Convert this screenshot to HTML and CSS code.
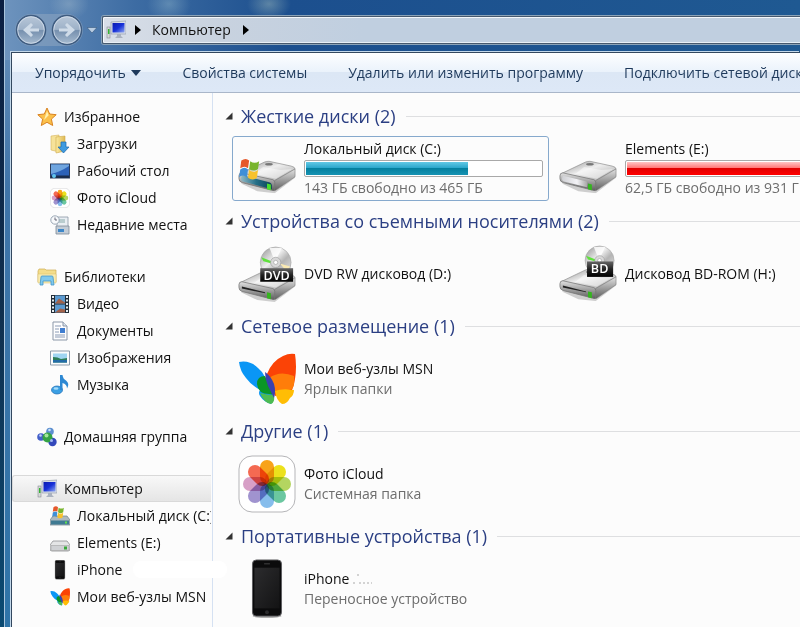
FILE: index.html
```html
<!doctype html>
<html lang="ru">
  <head>
    <meta charset="utf-8">
    <meta name="viewport" content="width=device-width, initial-scale=1">
    <title>Компьютер</title>
    <link rel="stylesheet" href="styles.css">
  </head>
  <body>
    <!-- shared shapes -->
    <svg class="defs" aria-hidden="true">
      <defs>
        <linearGradient id="g-top" x1="0" y1="0" x2="1" y2="1"><stop offset="0" stop-color="#8a8a8a"/><stop offset=".45" stop-color="#eee"/><stop offset="1" stop-color="#a5a5a5"/></linearGradient>
        <linearGradient id="g-side" x1="0" y1="0" x2="0" y2="1"><stop offset="0" stop-color="#e2e2e2"/><stop offset="1" stop-color="#5e5e5e"/></linearGradient>
        <linearGradient id="g-front" x1="0" y1="0" x2="1" y2="0"><stop offset="0" stop-color="#cfd0d4"/><stop offset=".6" stop-color="#f3f3f6"/><stop offset="1" stop-color="#a9a9a9"/></linearGradient>
        <linearGradient id="g-teal" x1="0" y1="0" x2="1" y2="0"><stop offset="0" stop-color="#8fb9c6"/><stop offset=".5" stop-color="#256f87"/><stop offset="1" stop-color="#0a4356"/></linearGradient>
        <linearGradient id="g-disc" x1="0" y1="0" x2="1" y2="1"><stop offset="0" stop-color="#8c8c8c"/><stop offset=".4" stop-color="#eee"/><stop offset=".6" stop-color="#b4b4b4"/><stop offset="1" stop-color="#ececec"/></linearGradient>
        <linearGradient id="g-tag" x1="0" y1="0" x2="0" y2="1"><stop offset="0" stop-color="#666"/><stop offset=".5" stop-color="#222"/><stop offset="1" stop-color="#000"/></linearGradient>
        <linearGradient id="g-screen" x1="0" y1="0" x2="1" y2="1"><stop offset="0" stop-color="#0a1bb0"/><stop offset=".5" stop-color="#1730d8"/><stop offset="1" stop-color="#8fa8f0"/></linearGradient>
        <linearGradient id="g-phone" x1="0" y1="0" x2="1" y2="1"><stop offset="0" stop-color="#2c2c2e"/><stop offset="1" stop-color="#131314"/></linearGradient>
        <linearGradient id="g-fold" x1="0" y1="0" x2="1" y2="0"><stop offset="0" stop-color="#fbeaa0"/><stop offset="1" stop-color="#dfb954"/></linearGradient>
        <linearGradient id="g-nav" x1="0" y1="0" x2="0" y2="1"><stop offset="0" stop-color="#b9c8d9"/><stop offset=".48" stop-color="#9db1c8"/><stop offset=".52" stop-color="#7690af"/><stop offset="1" stop-color="#a9bdd1"/></linearGradient>

        <symbol id="flag" viewBox="0 0 20 20">
          <path d="M3 2q4-3 7 0l-1 7q-3-3-7 0z" fill="#e5582b"/>
          <path d="M11 2.500q4 3 8 0l-1 7q-4 3-8 0z" fill="#79b52e"/>
          <path d="M2 10q4-3 7 0l-1 7q-4-3-7 0z" fill="#3f8fd8"/>
          <path d="M10 10.500q4 3 8 0l-1 7q-4 3-8 0z" fill="#f8c22c"/>
        </symbol>
        <symbol id="drive" viewBox="0 0 60 34">
          <path d="M3 24 20 32 38 34 59 18v-4z" fill="#000" opacity=".18"/>
          <path d="M2 14 27 2q2-1 5-1l23 5q4 1 4 3L38 21z" fill="url(#g-top)" stroke="#8d8d8d" stroke-width=".7"/>
          <path d="M38 21 59 9v8L39 31q-2 1-3 0z" fill="url(#g-side)" stroke="#7b7b7b" stroke-width=".6"/>
          <path d="M4 13 36 20q2 1 2 3v7q-1 2-3 1L4 23q-3-1-3-4v-3q0-3 3-3z" fill="url(#g-side)" stroke="#777" stroke-width=".8"/>
          <path d="M26 7 44 10 56 9 39 19 17 14z" fill="#fff" opacity=".45"/>
          <ellipse cx="32" cy="4" rx="4" ry="1.300" fill="#777"/>
        </symbol>
        <symbol id="monitor" viewBox="0 0 20 20">
          <rect x="1" y="7" width="3" height="11" fill="#d6dad6" stroke="#778" stroke-width=".5"/>
          <path d="M2 9h1.500v5H2z" fill="#32b432"/>
          <path d="M5 2 20 1v13L5 14z" fill="#d9dee8" stroke="#8a93a5" stroke-width=".6"/>
          <path d="M6.500 3h12v9.500h-12z" fill="url(#g-screen)"/>
          <path d="M11 14h4v2l2 2H9l2-2z" fill="#aab2bf"/>
        </symbol>
        <symbol id="petals" viewBox="0 0 58 58">
          <rect x="1" y="1" width="56" height="56" rx="13" fill="#fff" stroke="#b5b5b8"/>
          <g class="petals">
            <rect x="22" y="5" width="14" height="24" rx="7" fill="#f8a31b"/>
            <rect x="22" y="5" width="14" height="24" rx="7" fill="#ece11c" transform="rotate(45 29 29)"/>
            <rect x="22" y="5" width="14" height="24" rx="7" fill="#b4d560" transform="rotate(90 29 29)"/>
            <rect x="22" y="5" width="14" height="24" rx="7" fill="#6bc7a0" transform="rotate(135 29 29)"/>
            <rect x="22" y="5" width="14" height="24" rx="7" fill="#86bdec" transform="rotate(180 29 29)"/>
            <rect x="22" y="5" width="14" height="24" rx="7" fill="#a093cf" transform="rotate(225 29 29)"/>
            <rect x="22" y="5" width="14" height="24" rx="7" fill="#d79fc6" transform="rotate(270 29 29)"/>
            <rect x="22" y="5" width="14" height="24" rx="7" fill="#f46a52" transform="rotate(315 29 29)"/>
          </g>
        </symbol>
        <symbol id="butterfly" viewBox="0 0 58 54">
          <path d="M1 10Q12 8 20 16 25 20 27 25L34 42Q36 50 33 52 26 50 22 44 20 41 22 38 13 33 8 26 2 19 1 10z" fill="#0a96f5"/>
          <path d="M19 32Q19 24 27 24L36 43 31 42Q20 42 19 32z" fill="#0a9626"/>
          <path d="M22 41Q29 43 36 43 37 51 33 52 26 51 22 41z" fill="#4dbb52"/>
          <path d="M29 22Q34 9 45 4 51 1 57 2 59 15 57 27 56 34 54 38L37 44z" fill="#fb4306"/>
          <path d="M31 26Q42 18 56 24 57 33 54 37L37 40z" fill="#ff7d0a"/>
          <path d="M37 39Q44 36 56 38 56 43 52 46 49 52 44 52 38 48 37 39z" fill="#ffbd05"/>
          <path d="M27 20Q33 24 36 32 38 39 36 46 33 40 30 34 27 27 27 20z" fill="#3a40b0"/>
        </symbol>
        <symbol id="phone" viewBox="0 0 32 62">
          <ellipse cx="16" cy="59" rx="15" ry="2" fill="#000" opacity=".3"/>
          <rect x="1" y="1" width="30" height="58" rx="4" fill="#0b0b0c" stroke="#5d5d60"/>
          <rect x="3" y="9" width="26" height="42" fill="url(#g-phone)"/>
          <path d="M13 5h6" stroke="#444"/>
          <circle cx="16" cy="55" r="2" fill="#2a2a2c"/>
        </symbol>
        <symbol id="disc" viewBox="0 0 32 32">
          <circle cx="16" cy="16" r="15" fill="url(#g-disc)" stroke="#a5a5a5" stroke-width=".6"/>
          <path d="M2 11 12 15 12 17 4 15z" fill="#5fe03c"/>
          <path d="M20 17 30 20 27 25z" fill="#f9e9b2"/>
          <path d="M10 2 22 2 17 12h-3z" fill="#fff" opacity=".8"/>
          <circle cx="16" cy="16" r="5" fill="#d8d8d8" stroke="#999" stroke-width=".6"/>
          <circle cx="16" cy="16" r="2" fill="#fff" stroke="#999" stroke-width=".6"/>
        </symbol>
      </defs>
    </svg>

    <div class="window">
      <header class="titlebar">
        <div class="history">
          <button class="round" aria-label="Назад"><svg viewBox="0 0 32 32"><circle cx="16" cy="16" r="14.500" fill="url(#g-nav)" stroke="#3f5c80" stroke-width="1.500"/><circle cx="16" cy="16" r="13.300" fill="none" stroke="#d5e0ec" stroke-width=".8"/><path d="M8 16l8-7 2 2-3 3.500h9v3h-9l3 3.500-2 2z" fill="#cfdbe8"/></svg></button>
          <button class="round" aria-label="Вперед"><svg viewBox="0 0 32 32"><circle cx="16" cy="16" r="14.500" fill="url(#g-nav)" stroke="#3f5c80" stroke-width="1.500"/><circle cx="16" cy="16" r="13.300" fill="none" stroke="#d5e0ec" stroke-width=".8"/><path d="M24 16l-8-7-2 2 3 3.500H8v3h9L14 21l2 2z" fill="#cfdbe8"/></svg></button>
        </div>
        <button class="recent" aria-label="Последние страницы"><svg viewBox="0 0 10 6"><path d="M0 .5h10L5 6z" fill="#b9cde2" stroke="#35577e" stroke-width=".6"/></svg></button>
        <nav class="address" aria-label="Адрес">
          <svg class="ico"><use href="#monitor"/></svg>
          <svg class="arrow" viewBox="0 0 6 10"><path d="M0 0l6 5-6 5z"/></svg>
          <button class="crumb">Компьютер</button>
          <svg class="arrow" viewBox="0 0 6 10"><path d="M0 0l6 5-6 5z"/></svg>
        </nav>
      </header>

      <div class="client">
        <div class="toolbar">
          <button>Упорядочить <svg class="caret" viewBox="0 0 10 6"><path d="M0 0h10L5 6z"/></svg></button>
          <button>Свойства системы</button>
          <button>Удалить или изменить программу</button>
          <button>Подключить сетевой диск</button>
        </div>

        <div class="panes">
          <nav class="tree">
            <ul>
              <li><a href="#"><svg class="ico" viewBox="0 0 20 20"><path d="M10 1l2.700 6 6.500.7-4.800 4.400 1.300 6.400L10 15.300l-5.700 3.200 1.300-6.400L.8 7.700 7.300 7z" fill="#fbc04a" stroke="#d98322"/><path d="M10 4l1.700 4.300L7 13z" fill="#fff0b0"/></svg>Избранное</a></li>
              <li class="sub"><a href="#"><svg class="ico" viewBox="0 0 20 20"><path d="M1 2l8-1v17l-8-2z" fill="#f6e299" stroke="#d5b25a" stroke-width=".6"/><path d="M6 3l9-1v15l-9 2z" fill="url(#g-fold)" stroke="#cfa94c" stroke-width=".6"/><path d="M11 8h5v5h3l-5.500 6L8 13h3z" fill="#3f9be0" stroke="#1b67ac" stroke-width=".7"/></svg>Загрузки</a></li>
              <li class="sub"><a href="#"><svg class="ico" viewBox="0 0 20 20"><rect x=".5" y="3" width="19" height="14" fill="#2d62b8" stroke="#2b3b58"/><path d="M1 13Q10 11 19 5V3.500H1z" fill="#6fa5df"/><path d="M1 14.500h18V17H1z" fill="#1b2d4c"/><circle cx="4" cy="15" r="2" fill="#62c4ee"/></svg>Рабочий стол</a></li>
              <li class="sub"><a href="#"><svg class="ico"><use href="#petals"/></svg>Фото iCloud</a></li>
              <li class="sub"><a href="#"><svg class="ico" viewBox="0 0 20 20"><path d="M7 2h11v11H7z" fill="#e9eef3" stroke="#8b97a5" stroke-width=".8"/><path d="M6 11h13v8H6z" fill="#c3ccd6" stroke="#7e8a98" stroke-width=".8"/><path d="M9 5h6M9 7h6" stroke="#8aa"/><path d="M8 14h6v3H8z" fill="#3d87c9"/><circle cx="5" cy="5" r="4.200" fill="#f7f9fb" stroke="#9aa7b5"/><path d="M5 2.500V5h2" fill="none" stroke="#667"/></svg>Недавние места</a></li>
            </ul>
            <ul>
              <li><a href="#"><svg class="ico" viewBox="0 0 20 20"><path d="M1 4l1-2h6l1 1h10v12H1z" fill="#f3dd8b" stroke="#cfae55" stroke-width=".7"/><path d="M1 7h18v9H1z" fill="#f9ebb0" stroke="#d9bd68" stroke-width=".5"/><path d="M3 18l1-8q0-1 1-1h10q1 0 1 1l1 8h-3v-4H6v4z" fill="#7fc9ee" stroke="#4195c8" stroke-width=".8"/></svg>Библиотеки</a></li>
              <li class="sub"><a href="#"><svg class="ico" viewBox="0 0 20 20"><path d="M1 1h18v18H1z" fill="#222c36"/><path d="M5 1.500h10v8H5zM5 10.500h10v8H5z" fill="#5b9ad0"/><path d="M5 9.500l4-5 6 4v1zM5 18.500l5-4 5 1v3z" fill="#a2624a"/><path d="M3 2v17M17 2v17" stroke="#e6edf2" stroke-width="2" stroke-dasharray="2 1.500"/></svg>Видео</a></li>
              <li class="sub"><a href="#"><svg class="ico" viewBox="0 0 20 20"><path d="M3 1h10l4 4v14H3z" fill="#fdfdfe" stroke="#8b97a8"/><path d="M13 1v4h4" fill="#dde5ee" stroke="#8b97a8"/><path d="M5 5h6M5 8h4M5 11h4M5 14h10M5 16h10" stroke="#8b9bb5"/><path d="M10 7h5v5h-5z" fill="#3f7dd0"/></svg>Документы</a></li>
              <li class="sub"><a href="#"><svg class="ico" viewBox="0 0 20 20"><path d="M.5 3h19v14H.5z" fill="#fafbfc" stroke="#8e9cab"/><path d="M3 5.500h14v9H3z" fill="#9fd5f2"/><path d="M3 9q5 0 8 2l6-1v4.500H3z" fill="#2c7d58"/><path d="M3 12h14v2.500H3z" fill="#226ba8"/></svg>Изображения</a></li>
              <li class="sub"><a href="#"><svg class="ico" viewBox="0 0 20 20"><ellipse cx="7" cy="15" rx="5.500" ry="4" fill="#3b9fe3" stroke="#1d6cb5" stroke-width=".7"/><path d="M10 0h2.500Q13 4 16 5.500q4 3 1 8Q17 9 12.500 8v7H10z" fill="#2d88d3"/><ellipse cx="6" cy="13.500" rx="2.500" ry="1.200" fill="#a6dcfa"/></svg>Музыка</a></li>
            </ul>
            <ul>
              <li><a href="#"><svg class="ico" viewBox="0 0 20 20"><circle cx="13" cy="4.500" r="3.800" fill="#5d8fd0"/><circle cx="4" cy="10" r="3.800" fill="#4560c9"/><circle cx="15.500" cy="15" r="4.200" fill="#3348bb"/><circle cx="10.500" cy="10.500" r="5" fill="#35a345"/><circle cx="9.500" cy="8.500" r="2" fill="#a4e69a"/><circle cx="3.500" cy="8.500" r="1.300" fill="#bcd0fb"/><circle cx="14.500" cy="13.500" r="1.500" fill="#a2b6f6"/><circle cx="12.500" cy="3" r="1.300" fill="#c7e0f5"/></svg>Домашняя группа</a></li>
            </ul>
            <ul>
              <li class="selected"><a href="#" aria-current="page"><svg class="ico"><use href="#monitor"/></svg>Компьютер</a></li>
              <li class="sub"><a href="#"><svg class="ico" viewBox="0 0 20 20"><path d="M3 10h14l3 4v5H0v-5z" fill="#aeb9bf" stroke="#6f7f88" stroke-width=".7"/><path d="M1 14.500h18v4H1z" fill="#3f7a92"/><path d="M15 15.500h2v2h-2z" fill="#5fe24c"/><use href="#flag" x="1" y="0" width="14" height="13"/></svg>Локальный диск (C:)</a></li>
              <li class="sub"><a href="#"><svg class="ico" viewBox="0 0 20 20"><path d="M3 8h14l3 4v4q0 2-2 2H2q-2 0-2-2v-4z" fill="#e4e5e6" stroke="#8d8f92" stroke-width=".8"/><path d="M1 12.500h18v4q0 1-1 1H2q-1 0-1-1z" fill="#cfd1d4" stroke="#999" stroke-width=".5"/><path d="M14 13.500h3v3h-3z" fill="#39a83a"/></svg>Elements (E:)</a></li>
              <li class="sub blotted"><a href="#"><svg class="ico"><use href="#phone"/></svg>iPhone</a></li>
              <li class="sub"><a href="#"><svg class="ico"><use href="#butterfly"/></svg>Мои веб-узлы MSN</a></li>
            </ul>
          </nav>

          <main class="content">
            <details open>
              <summary><svg class="twist" viewBox="0 0 8 8"><path d="M7.500.5v7h-7z"/></svg><h2>Жесткие диски (2)</h2></summary>
              <div class="tiles">
                <a class="tile focused" href="#">
                  <svg class="big" viewBox="0 0 60 60"><use href="#drive" x="0" y="21" width="60" height="34"/><path d="M4 36l29 8q2 1 2 3v4L5 43q-2-1-2-3z" fill="url(#g-teal)"/><path d="M30 45l4 1v6l-4-1z" fill="#4be02c"/><use href="#flag" x="0" y="19" width="23" height="23"/></svg>
                  <span class="info">
                    <span class="name">Локальный диск (C:)</span>
                    <span class="bar"><span class="used" style="width: 69%"></span></span>
                    <span class="note">143 ГБ свободно из 465 ГБ</span>
                  </span>
                </a>
                <a class="tile" href="#">
                  <svg class="big" viewBox="0 0 60 60"><use href="#drive" x="0" y="21" width="60" height="34"/><path d="M4 37l25 6v6L5 43q-2-1-2-3z" fill="url(#g-front)"/><path d="M30 45l4 1v6l-4-1z" fill="#35b51f"/></svg>
                  <span class="info">
                    <span class="name">Elements (E:)</span>
                    <span class="bar full"><span class="used" style="width: 93%"></span></span>
                    <span class="note">62,5 ГБ свободно из 931 ГБ</span>
                  </span>
                </a>
              </div>
            </details>

            <details open>
              <summary><svg class="twist" viewBox="0 0 8 8"><path d="M7.500.5v7h-7z"/></svg><h2>Устройства со съемными носителями (2)</h2></summary>
              <div class="tiles">
                <a class="tile" href="#">
                  <svg class="big" viewBox="0 0 60 60"><use href="#drive" x="0" y="25" width="60" height="34"/><path d="M4 43l24 6v1L4 45z" fill="#222"/><path d="M30 49l4 1v6l-4-1z" fill="#35b51f"/><use href="#disc" x="22" y="1" width="34" height="34"/><rect x="23" y="24" width="34" height="14" fill="url(#g-tag)"/><text class="tag" x="40" y="36">DVD</text></svg>
                  <span class="info"><span class="name">DVD RW дисковод (D:)</span></span>
                </a>
                <a class="tile" href="#">
                  <svg class="big" viewBox="0 0 60 60"><use href="#drive" x="0" y="24" width="60" height="34"/><path d="M4 42l24 6v1L4 44z" fill="#222"/><path d="M30 48l4 1v6l-4-1z" fill="#35b51f"/><use href="#disc" x="26" y="0" width="32" height="32"/><rect x="29" y="17" width="27" height="16" fill="url(#g-tag)"/><text class="tag" x="42" y="29">BD</text></svg>
                  <span class="info"><span class="name">Дисковод BD-ROM (H:)</span></span>
                </a>
              </div>
            </details>

            <details open>
              <summary><svg class="twist" viewBox="0 0 8 8"><path d="M7.500.5v7h-7z"/></svg><h2>Сетевое размещение (1)</h2></summary>
              <div class="tiles">
                <a class="tile" href="#">
                  <svg class="big"><use href="#butterfly"/></svg>
                  <span class="info">
                    <span class="name">Мои веб-узлы MSN</span>
                    <span class="note">Ярлык папки</span>
                  </span>
                </a>
              </div>
            </details>

            <details open>
              <summary><svg class="twist" viewBox="0 0 8 8"><path d="M7.500.5v7h-7z"/></svg><h2>Другие (1)</h2></summary>
              <div class="tiles">
                <a class="tile" href="#">
                  <svg class="big"><use href="#petals"/></svg>
                  <span class="info">
                    <span class="name">Фото iCloud</span>
                    <span class="note">Системная папка</span>
                  </span>
                </a>
              </div>
            </details>

            <details open>
              <summary><svg class="twist" viewBox="0 0 8 8"><path d="M7.500.5v7h-7z"/></svg><h2>Портативные устройства (1)</h2></summary>
              <div class="tiles">
                <a class="tile" href="#">
                  <svg class="big"><use href="#phone"/></svg>
                  <span class="info">
                    <span class="name">iPhone <svg class="specks" viewBox="0 0 20 10"><path d="M0 9h2M4 1h2M6 9h2M10 9h2M14 9h2M18 9h1" stroke="#aaa"/></svg></span>
                    <span class="note">Переносное устройство</span>
                  </span>
                </a>
              </div>
            </details>
          </main>
        </div>
      </div>
    </div>
  </body>
</html>
```
FILE: styles.css
```css
* { box-sizing: border-box; }
html { height: 100%; }
body { margin: 0; min-height: 100%; display: flex; overflow: hidden; background: linear-gradient(#0b1f42, #10304f 50%, #0b4a72); font: 14px/20px "Open Sans", "Noto Sans", sans-serif; color: #111; }
button { border: 0; padding: 0; margin: 0; background: none; font: inherit; color: inherit; white-space: nowrap; }
a { color: inherit; text-decoration: none; }
ul { list-style: none; margin: 0; padding: 0; }
.defs { position: absolute; width: 0; height: 0; }
.ico { width: 20px; height: 20px; flex: none; }

/* glass frame */
.window { flex: 1; min-width: 0; margin-left: 4px; padding-left: 6px; display: flex; flex-direction: column; border-left: 1px solid #a9c4dc; background: radial-gradient(ellipse 20px 16px at 64px 4px, #a9bfce66, transparent), radial-gradient(ellipse 22px 18px at 164px 4px, #9cc0d066, transparent), radial-gradient(ellipse 22px 16px at 264px 4px, #b7cfc466, transparent), linear-gradient(90deg, #6d93bd, #3d6ca3 130px, #1c4f8e 280px, #1f5992) 0 0 / 100% 60px no-repeat, linear-gradient(#6d93bd, #3f74a8 30%, #2f74a8); }
.titlebar { display: flex; align-items: center; height: 52px; padding: 8px 0 0 4px; }
.history { display: flex; gap: 4px; border-radius: 17px; background: #8ba3bf99; }
.round { width: 32px; height: 32px; }
.round svg { display: block; }
.recent { width: 10px; margin: 0 5px 0 4px; }
.recent svg { display: block; }
.address { flex: 1; display: flex; align-items: center; height: 28px; padding-left: 3px; border: 1px solid #47596e; border-right: 0; border-radius: 2px 0 0 2px; background: linear-gradient(90deg, #d9dfe8, #c8d2df 120px, #c0cfe0 260px); box-shadow: inset 1px 1px #f3f7fb, inset 0 -1px #e8eff6, 0 0 0 1px #8ba3b8; }
.arrow { width: 6px; height: 10px; margin: 0 11px 0 9px; }
.crumb + .arrow { margin-left: 12px; }

.client { flex: 1; display: flex; flex-direction: column; border-left: 1px solid #33485f; border-top: 1px solid #33485f; background: #fcfcfc; box-shadow: -1px -1px #c3d8ea; }
.toolbar { display: flex; align-items: center; gap: 41px; height: 40px; padding-left: 23px; overflow: hidden; border-bottom: 1px solid #a9b6c9; background: linear-gradient(#fdfeff, #eaf2fb 49%, #dce7f5 50%, #dde8f7); color: #1e395b; }
.caret { width: 10px; height: 6px; margin-left: 2px; vertical-align: 2px; fill: #1e395b; }
.panes { flex: 1; display: flex; }

/* navigation tree */
.tree { width: 201px; flex: none; padding: 10px 0; border-right: 1px solid #d5e1f2; }
.tree ul + ul { margin-top: 25px; }
.tree a { display: flex; align-items: center; gap: 7px; height: 27px; padding-left: 25px; margin-right: 1px; overflow: hidden; white-space: nowrap; }
.tree .sub a { padding-left: 38px; }
.tree .selected a { border: 1px solid #d9d9d9; border-right: 0; border-radius: 3px 0 0 3px; padding-left: 24px; background: linear-gradient(#f8f8f8, #e5e5e5); }
.blotted { position: relative; }
/* wiped-out device name, runs over the divider */
.blotted::after { content: ""; position: absolute; left: 121px; top: 5px; width: 94px; height: 17px; border-radius: 8px; background: #fff; }

/* drives and devices */
.content { flex: 1; min-width: 0; padding: 12px 0 0 16px; overflow: hidden; }
summary { display: flex; align-items: center; height: 22px; list-style: none; }
summary::after { content: ""; flex: 1; height: 1px; margin-left: 10px; background: #dedfe1; }
.twist { width: 8px; height: 8px; margin: 0 8px 0 -4px; fill: #333; }
h2 { margin: 0; font-size: 18px; line-height: 22px; font-weight: 400; color: #2b3f83; white-space: nowrap; }
.tiles { display: grid; grid-template-columns: 317px 317px; gap: 4px; padding: 9px 0 9px 3px; }
.tile { display: flex; align-items: center; gap: 8px; height: 65px; padding: 0 5px; border: 1px solid transparent; border-radius: 3px; }
.focused { border-color: #86a9cd; }
.big { width: 58px; height: 60px; flex: none; }
.petals rect { mix-blend-mode: multiply; }
.tag { font: 600 13px "Open Sans", sans-serif; fill: #fff; text-anchor: middle; }
.info { flex: 1; display: flex; flex-direction: column; white-space: nowrap; }
.note { color: #6d6d6d; }
.bar { height: 17px; margin: 1px 0; padding: 1px; border: 1px solid #a9a9a9; border-radius: 2px; background: #fff; }
.used { display: block; height: 100%; background: linear-gradient(#62c9e6, #2ba7cb 45%, #04809f 50%, #1793b3); }
.full .used { background: linear-gradient(#ffc4c4, #f77 45%, #e00000 50%, #f00); }
.specks { width: 20px; height: 10px; }
```
